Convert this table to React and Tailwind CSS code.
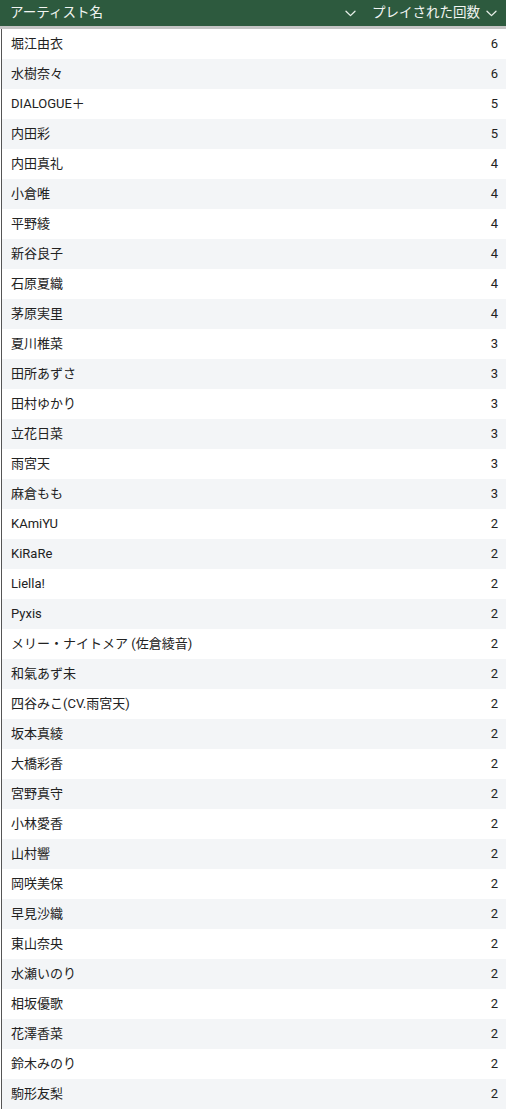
import React from "react";

const rows = [
  ["堀江由衣", 6], ["水樹奈々", 6], ["DIALOGUE＋", 5], ["内田彩", 5], ["内田真礼", 4], ["小倉唯", 4],
  ["平野綾", 4], ["新谷良子", 4], ["石原夏織", 4], ["茅原実里", 4], ["夏川椎菜", 3], ["田所あずさ", 3],
  ["田村ゆかり", 3], ["立花日菜", 3], ["雨宮天", 3], ["麻倉もも", 3], ["KAmiYU", 2], ["KiRaRe", 2],
  ["Liella!", 2], ["Pyxis", 2], ["メリー・ナイトメア (佐倉綾音)", 2], ["和氣あず未", 2], ["四谷みこ(CV.雨宮天)", 2],
  ["坂本真綾", 2], ["大橋彩香", 2], ["宮野真守", 2], ["小林愛香", 2], ["山村響", 2], ["岡咲美保", 2],
  ["早見沙織", 2], ["東山奈央", 2], ["水瀬いのり", 2], ["相坂優歌", 2], ["花澤香菜", 2], ["鈴木みのり", 2], ["駒形友梨", 2],
];

function Chevron() {
  return (
    <svg width="11" height="7" viewBox="0 0 11 7" fill="none" className="shrink-0">
      <path d="M1 1.2 L5.5 5.6 L10 1.2" stroke="#e8efe9" strokeWidth="1.3" strokeLinecap="round" strokeLinejoin="round" />
    </svg>
  );
}

export default function App() {
  return (
    <div
      className="w-[506px] h-[1114px] bg-white overflow-hidden text-[#222]"
      style={{ fontFamily: 'Roboto, "Noto Sans CJK JP", "Noto Sans", sans-serif' }}
    >
      <div className="flex h-[26px] bg-[#2d5a3e] text-[#f2f5f2] text-[13.5px] items-center whitespace-nowrap">
        <div className="flex items-center justify-between w-[362px] pl-[10px] pr-[6px]">
          <span className="leading-none">アーティスト名</span>
          <Chevron />
        </div>
        <div className="flex items-center justify-end flex-1 gap-[6px] pr-[9px]">
          <span className="leading-none">プレイされた回数</span>
          <Chevron />
        </div>
      </div>
      <div className="h-[3px] bg-[#c4c4c4]" />
      <div className="ml-[1px] border-l border-[#555]">
        {rows.map(([name, n], i) => (
          <div
            key={name}
            className={`flex items-center justify-between h-[30px] pl-[9px] pr-[8px] text-[13px] ${
              i % 2 === 0 ? "bg-white" : "bg-[#f3f5f7]"
            }`}
          >
            <span>{name}</span>
            <span>{n}</span>
          </div>
        ))}
      </div>
    </div>
  );
}
